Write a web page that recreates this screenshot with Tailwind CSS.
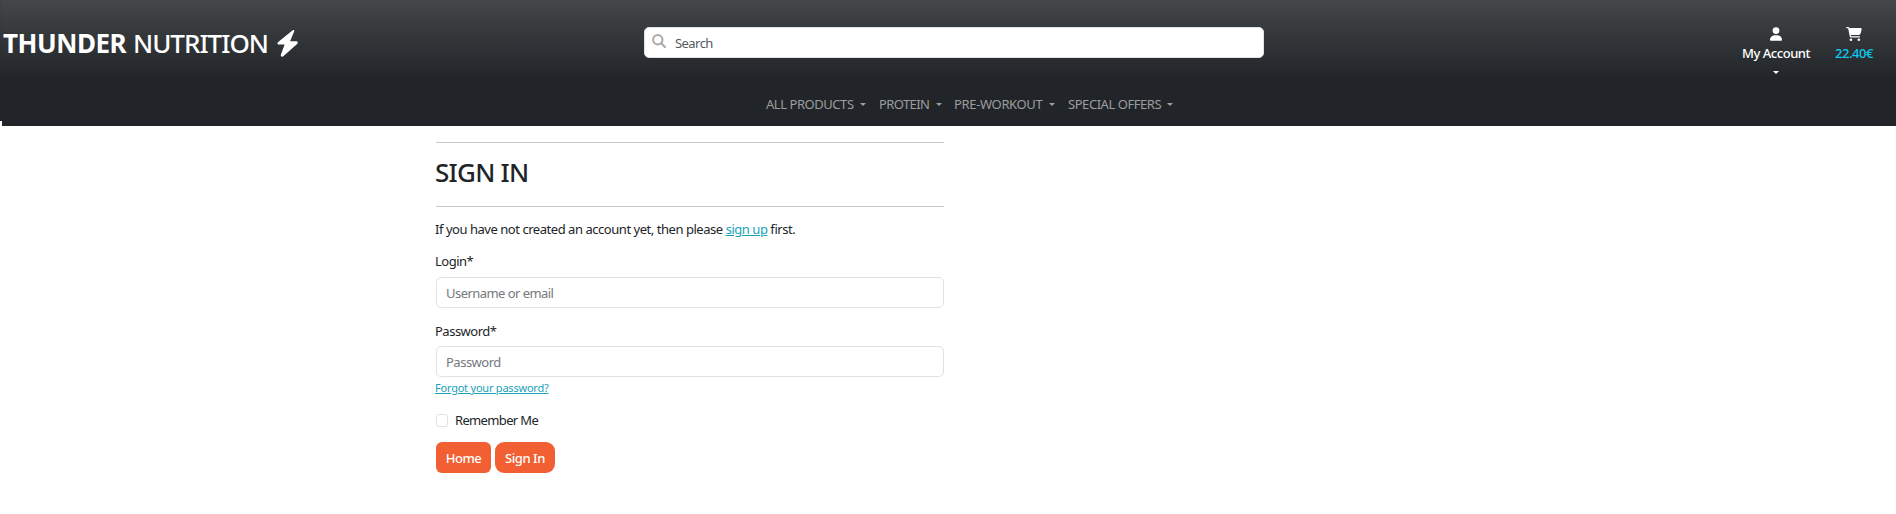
<!DOCTYPE html>
<html lang="en">
<head>
<meta charset="utf-8">
<title>Thunder Nutrition - Sign In</title>
<script src="https://cdn.jsdelivr.net/npm/@tailwindcss/browser@4"></script>
</head>
<body class="bg-white font-['Noto_Sans','Open_Sans',sans-serif] text-[13px] leading-[20px] text-[#212529] overflow-hidden">
<header class="flex h-[126px] items-start">
  <div class="h-[121px] w-[2px] shrink-0 bg-linear-to-b from-[#414547] to-[#212529] to-[80px]"></div>
  <div class="h-[126px] grow bg-linear-to-b from-[#434749] to-[#212529] to-[80px]">
    <div class="flex h-[88px] items-start">
      <a class="mt-[23px] ml-[1px] flex h-[40px] w-[641px] items-center text-[26px] text-white">
        <span class="w-[130px] whitespace-nowrap font-bold tracking-[-0.45px]">THUNDER</span>
        <span class="w-[144px] whitespace-nowrap font-medium tracking-[-1px]">NUTRITION</span>
        <svg class="h-[27px] w-[21px]" viewBox="0 0 21 27" fill="currentColor"><path d="M17.3 1.1C17.6.4 16.6-.3 15.7.3L1.2 12.1c-1.3 1.2-.8 2.5.7 2.5h5.7L3.9 24.4c-.6 1.8 1 2.9 2.4 1.9L20.1 13.9c1.2-1.1.6-2.6-.8-2.6h-6.2z"/></svg>
      </a>
      <div class="mt-[27px] flex h-[31px] w-[620px] items-center rounded-[5px] border border-[#dee2e6] bg-white pl-[7px]">
        <svg class="mb-[3px] h-[14px] w-[14px]" viewBox="0 0 14 14" fill="none" stroke="#aaa" stroke-width="2"><circle cx="5.8" cy="5.8" r="4.7"/><path d="M9.2 9.2l4 4" stroke-linecap="round"/></svg>
        <span class="ml-[9px] mt-[1px] tracking-[-0.55px] text-[#55595d]">Search</span>
      </div>
      <div class="mt-[27px] ml-[469px] flex w-[86px] flex-col items-center text-white">
        <svg class="h-[14px] w-[12px]" viewBox="0 0 448 512" fill="currentColor"><path d="M224 256a128 128 0 1 0 0-256 128 128 0 1 0 0 256zm-46 48C80 304 0 384 0 482c0 17 13 30 30 30h388c17 0 30-13 30-30 0-98-80-178-178-178z"/></svg>
        <span class="mt-[2px] whitespace-nowrap tracking-[-0.45px] font-medium">My Account</span>
        <span class="mt-[8px] border-x-3 border-t-3 border-x-transparent border-t-white"></span>
      </div>
      <div class="mt-[27px] ml-[4px] flex w-[62px] flex-col items-center text-[#0dcaf0]">
        <svg class="h-[14px] w-[16px]" viewBox="0 0 576 512" fill="white"><path d="M0 24C0 11 11 0 24 0h46c22 0 41 13 50 32h411c26 0 45 25 38 50l-41 152c-9 32-38 54-70 54H171l5 28c2 12 12 20 24 20h288c13 0 24 11 24 24s-11 24-24 24H200c-35 0-65-25-71-59L77 54c-1-4-4-6-7-6H24C11 48 0 37 0 24zm128 440a48 48 0 1 1 96 0 48 48 0 1 1-96 0zm336-48a48 48 0 1 1 0 96 48 48 0 1 1 0-96z"/></svg>
        <span class="mt-[2px] whitespace-nowrap tracking-[-0.45px] font-medium">22.40€</span>
      </div>
    </div>
    <nav class="flex pl-[764px] pt-[6px] text-[#9b9d9f] whitespace-nowrap">
      <a class="flex w-[113px] items-center"><span class="w-[94px] tracking-[-0.45px]">ALL PRODUCTS</span><span class="border-x-3 border-t-3 border-x-transparent border-t-[#9b9d9f]"></span></a>
      <a class="flex w-[75px] items-center"><span class="w-[57px] tracking-[-0.6px]">PROTEIN</span><span class="border-x-3 border-t-3 border-x-transparent border-t-[#9b9d9f]"></span></a>
      <a class="flex w-[114px] items-center"><span class="w-[95px] tracking-[-0.35px]">PRE-WORKOUT</span><span class="border-x-3 border-t-3 border-x-transparent border-t-[#9b9d9f]"></span></a>
      <a class="flex w-[113px] items-center"><span class="w-[99px] tracking-[-0.45px]">SPECIAL OFFERS</span><span class="border-x-3 border-t-3 border-x-transparent border-t-[#9b9d9f]"></span></a>
    </nav>
  </div>
</header>
<main class="ml-[436px] flex w-[508px] flex-col items-start pt-[16px]">
  <div class="h-[65px] w-full border-y border-[#c8c9ca] flex items-start">
    <h1 class="-ml-px mt-[13px] text-[26px] leading-[32px] font-medium tracking-[-0.75px]">SIGN IN</h1>
  </div>
  <p class="-ml-px mt-[12px] whitespace-nowrap tracking-[-0.46px]">If you have not created an account yet, then please <a class="text-[#17a2b8] underline">sign up</a> first.</p>
  <label class="-ml-px mt-[12px] tracking-[-0.5px]">Login*</label>
  <div class="mt-[6px] flex h-[31px] w-[508px] items-center rounded-[5px] border border-[#dee2e6] pl-[9px] pt-[1px] tracking-[-0.55px] text-[#75797d]">Username or email</div>
  <label class="-ml-px mt-[13px] tracking-[-0.5px]">Password*</label>
  <div class="mt-[5px] flex h-[31px] w-[508px] items-center rounded-[5px] border border-[#dee2e6] pl-[9px] pt-[1px] tracking-[-0.5px] text-[#75797d]">Password</div>
  <a class="-ml-px mt-[1px] text-[11px] tracking-[-0.22px] text-[#17a2b8] underline">Forgot your password?</a>
  <div class="mt-[12px] flex items-center">
    <span class="mt-[1px] h-[13px] w-[12px] rounded-[3px] border border-[#dee2e6]"></span>
    <span class="ml-[7px] tracking-[-0.65px]">Remember Me</span>
  </div>
  <div class="mt-[12px] flex gap-[4px] font-medium text-white">
    <button class="h-[31px] w-[55px] rounded-[6px] bg-[#f15f33] pt-[1px] tracking-[-0.45px]">Home</button>
    <button class="h-[31px] w-[60px] rounded-[9px] bg-[#f15f33] pt-[1px] tracking-[-0.45px]">Sign In</button>
  </div>
</main>
</body>
</html>
